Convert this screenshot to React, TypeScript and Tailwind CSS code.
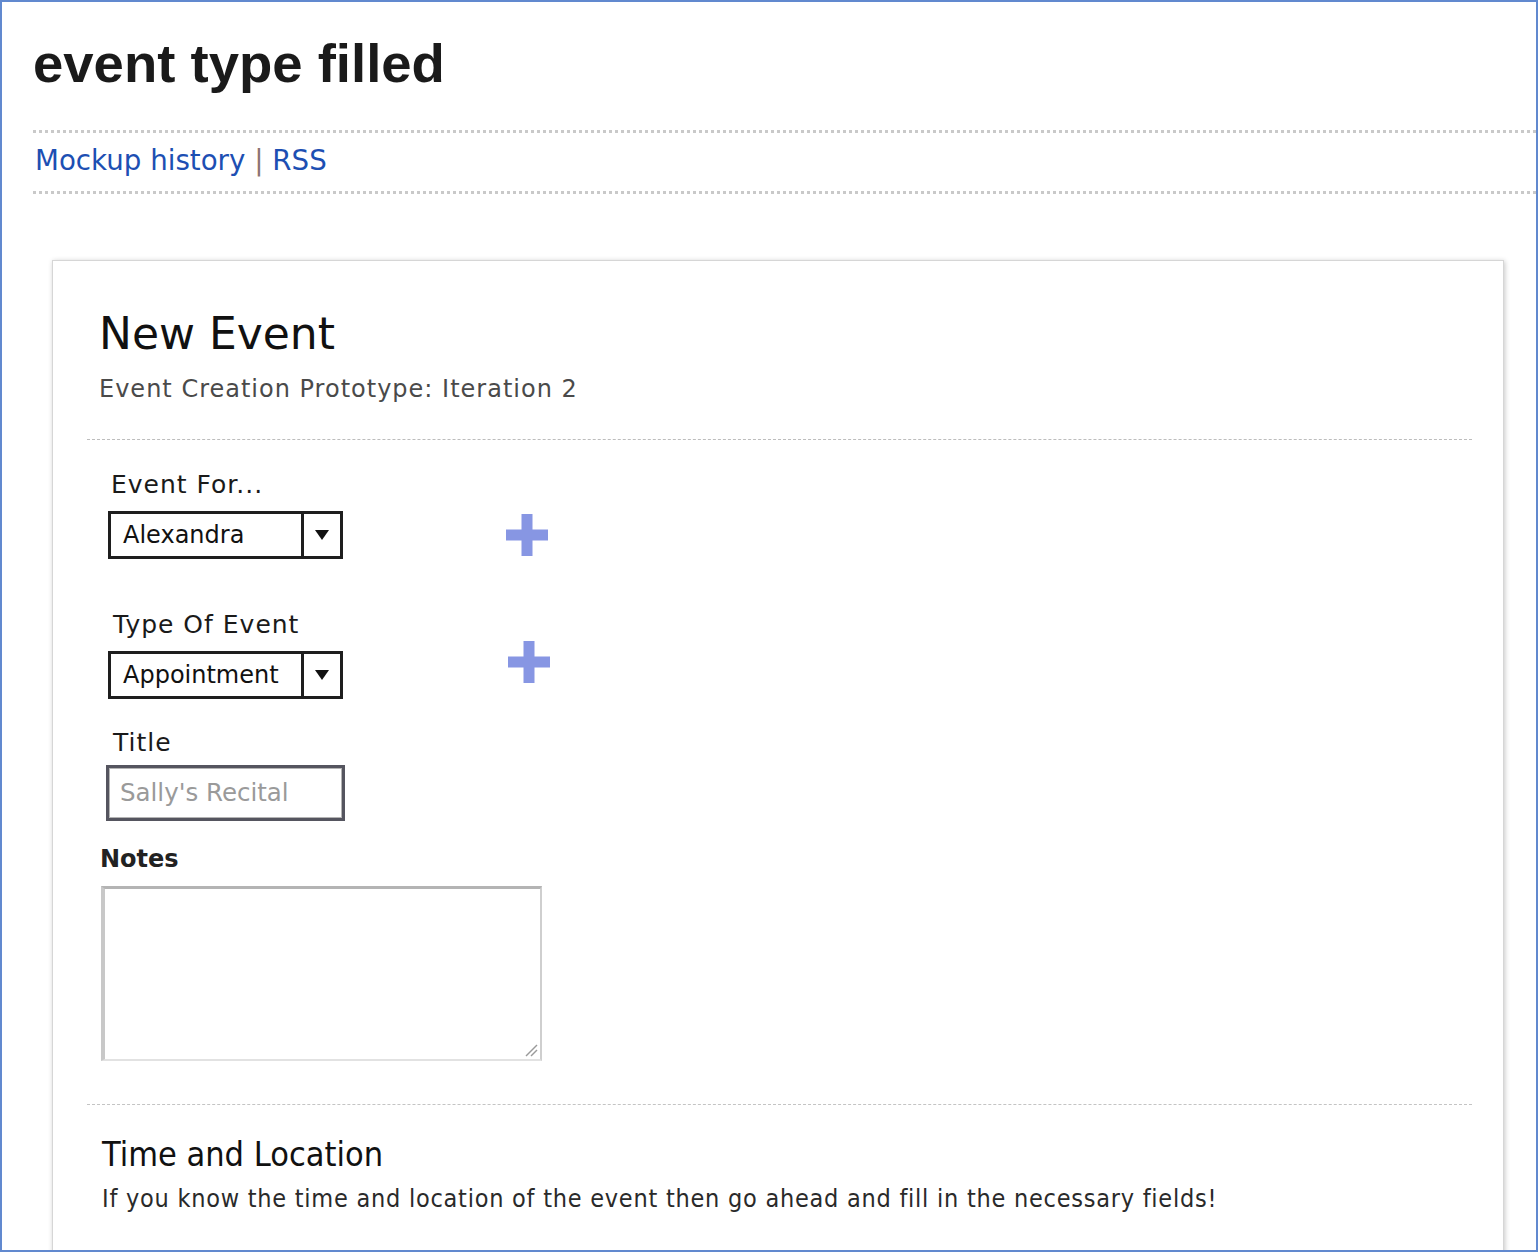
import React from 'react';

// Sketch-style select used by the mockup
const SketchSelect: React.FC<{ value: string }> = ({ value }) => (
  <div className="flex h-[48px] w-[235px] items-stretch border-[3px] border-[#1e1e1e] bg-white">
    <div className="flex flex-1 items-center pl-[12px] text-[24px] text-[#111]">{value}</div>
    <div className="flex w-[39px] items-center justify-center border-l-[3px] border-[#1e1e1e]">
      <svg width="16" height="12" viewBox="0 0 16 12">
        <polygon points="1,1 15,1 8,11" fill="#111" />
      </svg>
    </div>
  </div>
);

const PlusIcon: React.FC = () => (
  <svg width="46" height="46" viewBox="0 0 46 46">
    <rect x="17.5" y="2" width="11" height="42" fill="#8796e3" />
    <rect x="2" y="17.5" width="42" height="11" fill="#8796e3" />
  </svg>
);

const App: React.FC = () => {
  return (
    <div className="h-[1252px] w-[1538px] overflow-hidden border-2 border-[#6189cf] bg-white font-['DejaVu_Sans',sans-serif]">
      {/* Page header */}
      <div className="pl-[31px]">
        <h1 className="pt-[32px] font-['Liberation_Sans',Arial,sans-serif] text-[54.5px] font-bold leading-[60px] text-[#1a1a1a]">
          event type filled
        </h1>
        <div className="mt-[36px] h-[3px] bg-[repeating-linear-gradient(90deg,#c9c9c9_0_3px,transparent_3px_6px)]" />
        <div className="pt-[10px] pb-[12px] pl-[2px] text-[27.7px] leading-[36px] text-[#1d4fb3]">
          <span>Mockup history</span>
          <span className="text-[#8c7373]"> | </span>
          <span>RSS</span>
        </div>
        <div className="h-[3px] bg-[repeating-linear-gradient(90deg,#c9c9c9_0_3px,transparent_3px_6px)]" />
      </div>

      {/* Mockup card */}
      <div className="mt-[66px] ml-[50px] h-[1100px] w-[1452px] border border-[#d6d6d6] bg-white pl-[34px] pr-[31px] shadow-[1px_1px_5px_rgba(0,0,0,0.22)]">
        <div className="pl-[12px] pt-[47px]">
          <h2 className="text-[44px] leading-[52px] text-[#111]">New Event</h2>
          <p className="mt-[12px] text-[24px] leading-[34px] tracking-[1px] text-[#4a4a4a]">Event Creation Prototype: Iteration 2</p>
        </div>

        <div className="mt-[33px] border-t border-dashed border-[#bdbdbd]" />

        <div className="pl-[21px]">
          <div className="mt-[29px] pl-[3px] text-[25px] leading-[32px] tracking-[1px] text-[#1a1a1a]">Event For...</div>
          <div className="mt-[10px] flex items-center">
            <SketchSelect value="Alexandra" />
            <div className="ml-[161px]">
              <PlusIcon />
            </div>
          </div>

          <div className="mt-[50px] pl-[5px] text-[25px] leading-[32px] tracking-[1px] text-[#1a1a1a]">Type Of Event</div>
          <div className="mt-[10px] flex items-center">
            <SketchSelect value="Appointment" />
            <div className="ml-[163px] -mt-[26px]">
              <PlusIcon />
            </div>
          </div>

          <div className="mt-[28px] pl-[5px] text-[25px] leading-[32px] tracking-[1px] text-[#1a1a1a]">Title</div>
          <div className="mt-[6px] -ml-[2px] flex h-[56px] w-[239px] items-center border-[3px] border-[#55555f] pl-[11px] text-[24.5px] text-[#9a9a9a] shadow-[inset_0_0_0_1px_#b4b4b4]">
            Sally's Recital
          </div>
        </div>

        <div className="pl-[15px]">
          <div className="mt-[22px] -ml-[2px] text-[24px] font-bold leading-[32px] text-[#222]">Notes</div>
          <div className="relative mt-[11px] -ml-[1px] h-[175px] w-[441px] border-t-[3px] border-r-2 border-b-2 border-l-4 border-t-[#b4b4b4] border-r-[#cfcfcf] border-b-[#e2e2e2] border-l-[#c8c8c8] bg-white">
            <svg className="absolute right-[2px] bottom-[2px]" width="16" height="16" viewBox="0 0 16 16">
              <line x1="15" y1="4" x2="4" y2="15" stroke="#9a9a9a" strokeWidth="1.5" />
              <line x1="15" y1="9" x2="9" y2="15" stroke="#9a9a9a" strokeWidth="1.5" />
            </svg>
          </div>
        </div>

        <div className="mt-[43px] border-t border-dashed border-[#c4c4c4]" />

        <div className="pl-[15px]">
          <h3 className="mt-[29px] font-['DejaVu_Sans_Condensed','DejaVu_Sans',sans-serif] text-[34px] leading-[40px] text-[#111] [font-stretch:condensed]">
            Time and Location
          </h3>
          <p className="mt-[10px] font-['DejaVu_Sans_Condensed','DejaVu_Sans',sans-serif] text-[25px] leading-[30px] tracking-[0.75px] text-[#2a2a2a] [font-stretch:condensed]">
            If you know the time and location of the event then go ahead and fill in the necessary fields!
          </p>
        </div>
      </div>
    </div>
  );
};

export default App;
